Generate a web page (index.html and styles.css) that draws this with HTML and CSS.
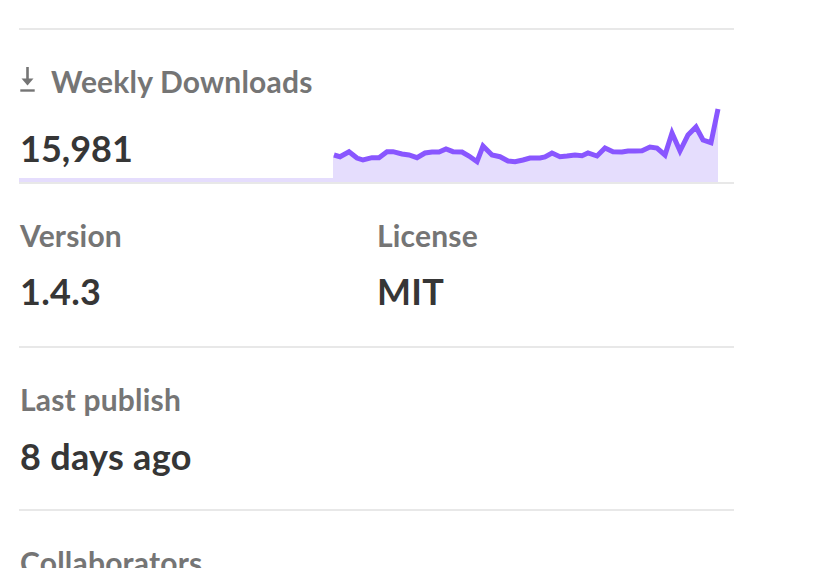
FILE: index.html
```html
<!DOCTYPE html>
<html lang="en">
<head>
    <meta charset="UTF-8">
    <meta name="viewport" content="width=device-width, initial-scale=1.0">
    <title>Package stats</title>
    <link rel="stylesheet" href="styles.css">
</head>
<body>
    <div class="sidebar">
        <div class="block downloads">
            <h3 class="label">
                <svg class="dl-icon" viewBox="0 0 15 25" width="15" height="25">
                    <rect x="6.2" y="0" width="2.6" height="14" fill="#757575"/>
                    <polygon points="1.5,11.5 13.5,11.5 7.5,18.5" fill="#757575"/>
                    <rect x="0.3" y="22.3" width="14.4" height="2.4" fill="#757575"/>
                </svg>
                Weekly Downloads
            </h3>
            <div class="dl-row">
                <p class="count">15,981</p>
                <svg class="spark" viewBox="0 0 385 79" width="385" height="79">
                    <polygon class="spark-fill" points="1,52 7,53.7 16,48.7 24,55 30,57 39,54.7 46,54.7 54,48.7 60,48.7 69,51 76,52 84,54.7 92,50 99,49 106,49 113,46 120,48.7 129,49 136,53 144,58.7 150,43 159,52 167,53.7 175,58 182,58.7 190,57 197,55 207,55 212,54 219,50 227,53.7 234,53 242,52 249,52.7 255,50 264,53 272,45 280,48.7 289,49 295,48 302,48 309,47.7 317,44 324,45 332,52 339,30 347,48 355,32 363,24 370,37 378,39.7 385,6 385,79 0,79 0,52"/>
                    <polyline class="spark-line" points="1,52 7,53.7 16,48.7 24,55 30,57 39,54.7 46,54.7 54,48.7 60,48.7 69,51 76,52 84,54.7 92,50 99,49 106,49 113,46 120,48.7 129,49 136,53 144,58.7 150,43 159,52 167,53.7 175,58 182,58.7 190,57 197,55 207,55 212,54 219,50 227,53.7 234,53 242,52 249,52.7 255,50 264,53 272,45 280,48.7 289,49 295,48 302,48 309,47.7 317,44 324,45 332,52 339,30 347,48 355,32 363,24 370,37 378,39.7 385,6"/>
                </svg>
            </div>
        </div>
        <div class="block pair">
            <div>
                <h3 class="label">Version</h3>
                <p class="value">1.4.3</p>
            </div>
            <div>
                <h3 class="label">License</h3>
                <p class="value">MIT</p>
            </div>
        </div>
        <div class="block">
            <h3 class="label">Last publish</h3>
            <p class="value">8 days ago</p>
        </div>
        <div class="block">
            <h3 class="label">Collaborators</h3>
        </div>
    </div>
</body>
</html>
```

FILE: styles.css
```css
body {
    margin: 0;
    background-color: #fff;
    font-family: Lato, "Open Sans", sans-serif;
    overflow: hidden;
}
.sidebar {
    width: 715px;
    margin: 28px 0 0 19px;
    border-top: 2px solid #e8e8e8;
}
.block {
    padding: 33px 0 33px 1px;
    border-bottom: 2px solid #e8e8e8;
}
.label {
    display: flex;
    align-items: center;
    gap: 16px;
    margin: 0;
    font-size: 30px;
    line-height: 36px;
    font-weight: 700;
    color: #757575;
    letter-spacing: 0.2px;
}
.value {
    margin: 19px 0 0;
    font-size: 36px;
    line-height: 40px;
    font-weight: 700;
    color: #363636;
    letter-spacing: 0.3px;
}
.pair {
    display: grid;
    grid-template-columns: 1fr 1fr;
    padding: 33px 0 35px 1px;
}
.pair .value {
    margin-top: 18px;
}

/* weekly downloads: number + sparkline */
.downloads {
    padding-bottom: 0;
}
.dl-icon {
    margin-top: -3px;
}
.dl-row {
    display: flex;
    align-items: flex-end;
    margin: 4px 16px 0 -1px;
}
.count {
    flex: 1;
    margin: 0;
    padding: 0 0 10px 1px;
    border-bottom: 4px solid #e5ddfd;
    font-size: 36px;
    line-height: 40px;
    font-weight: 700;
    color: #363636;
}
.spark {
    display: block;
    overflow: visible;
}
.spark-fill {
    fill: #e5ddfd;
}
.spark-line {
    fill: none;
    stroke: #8956ff;
    stroke-width: 5;
    stroke-linejoin: miter;
}
```
